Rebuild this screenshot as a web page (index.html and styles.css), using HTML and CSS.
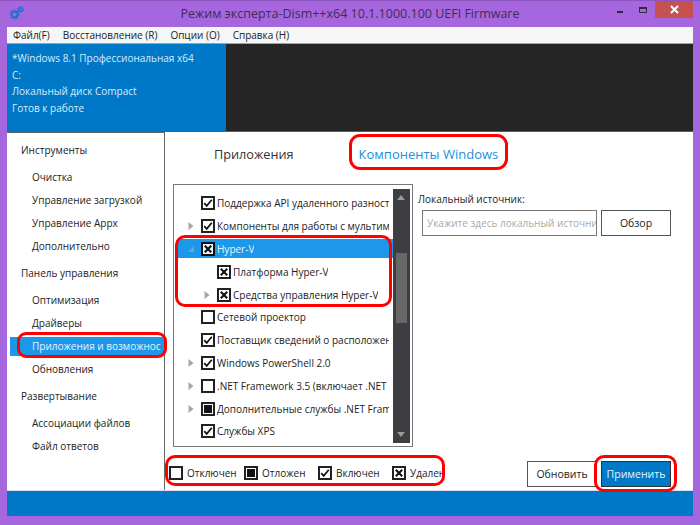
FILE: index.html
```html
<!DOCTYPE html>
<html lang="en">
<head>
    <meta charset="UTF-8">
    <title>Dism++</title>
    <link rel="stylesheet" href="styles.css">
</head>
<body>
    <svg class="defs" width="0" height="0">
        <symbol id="on" viewBox="0 0 10 10"><path d="M1.2 5.2l2.5 2.7L8.8 1.8" fill="none" stroke="#111" stroke-width="1.7"/></symbol>
        <symbol id="del" viewBox="0 0 10 10"><path d="M1.8 1.8l6.4 6.4M8.2 1.8L1.8 8.2" fill="none" stroke="#111" stroke-width="2.1"/></symbol>
        <symbol id="arrow" viewBox="0 0 8 10"><path d="M1.5 1l5 4-5 4z" fill="#a6a6a6"/></symbol>
    </svg>
    <div class="window">
        <div class="titlebar">
            <svg class="logo" width="14" height="14" viewBox="0 0 14 14">
                <circle cx="4.5" cy="8.5" r="3" fill="none" stroke="#0a7ad1" stroke-width="1.8"/>
                <circle cx="4.5" cy="8.5" r="4.4" fill="none" stroke="#0a7ad1" stroke-width="1.2" stroke-dasharray="1.6 1.6"/>
                <circle cx="10.5" cy="3.5" r="1.8" fill="none" stroke="#0a7ad1" stroke-width="1.5"/>
                <circle cx="10.5" cy="3.5" r="3" fill="none" stroke="#0a7ad1" stroke-width="1" stroke-dasharray="1.3 1.2"/>
            </svg>
            <div class="title">Режим эксперта-Dism++x64 10.1.1000.100 UEFI Firmware</div>
            <div class="controls">
                <svg class="ctl" width="27" height="18" viewBox="0 0 27 18"><rect x="13" y="10" width="6" height="2" fill="#2b2b3a"/></svg>
                <svg class="ctl" width="24" height="18" viewBox="0 0 24 18"><path d="M8.5 6.5h7v5h-7z" fill="none" stroke="#2b2b3a"/><rect x="8" y="6" width="8" height="2" fill="#2b2b3a"/></svg>
                <div class="close">
                    <svg width="9" height="9" viewBox="0 0 9 9"><path d="M1 1l7 7M8 1l-7 7" stroke="#fff" stroke-width="2"/></svg>
                </div>
            </div>
        </div>

        <div class="menu">
            <span>Файл(F)</span>
            <span>Восстановление (R)</span>
            <span>Опции (O)</span>
            <span>Справка (H)</span>
        </div>

        <div class="status">
            <div class="status-info">
                <p>*Windows 8.1 Профессиональная x64</p>
                <p>C:</p>
                <p>Локальный диск Compact</p>
                <p>Готов к работе</p>
            </div>
            <div class="status-dark"></div>
        </div>

        <div class="content">
            <div class="sidebar">
                <h3>Инструменты</h3>
                <a>Очистка</a>
                <a>Управление загрузкой</a>
                <a>Управление Appx</a>
                <a>Дополнительно</a>
                <h3>Панель управления</h3>
                <a>Оптимизация</a>
                <a>Драйверы</a>
                <a class="active">Приложения и возможнос</a>
                <a>Обновления</a>
                <h3>Развертывание</h3>
                <a>Ассоциации файлов</a>
                <a>Файл ответов</a>
                <div class="mark mark-side"></div>
            </div>

            <div class="main">
                <div class="tabs">
                    <div class="tab">Приложения</div>
                    <div class="tab tab-active">Компоненты Windows</div>
                </div>

                <div class="panel">
                    <div class="tree">
                        <div class="rows">
                            <div class="row lvl0"><span class="exp"></span><span class="box"><svg><use href="#on"/></svg></span><span class="txt">Поддержка API удаленного разност</span></div>
                            <div class="row lvl0"><span class="exp"><svg><use href="#arrow"/></svg></span><span class="box"><svg><use href="#on"/></svg></span><span class="txt">Компоненты для работы с мультим</span></div>
                            <div class="row lvl0 selected"><span class="exp exp-open"></span><span class="box"><svg><use href="#del"/></svg></span><span class="txt">Hyper-V</span></div>
                            <div class="row lvl1"><span class="exp"></span><span class="box"><svg><use href="#del"/></svg></span><span class="txt">Платформа Hyper-V</span></div>
                            <div class="row lvl1"><span class="exp"><svg><use href="#arrow"/></svg></span><span class="box"><svg><use href="#del"/></svg></span><span class="txt">Средства управления Hyper-V</span></div>
                            <div class="row lvl0"><span class="exp"></span><span class="box"></span><span class="txt">Сетевой проектор</span></div>
                            <div class="row lvl0"><span class="exp"></span><span class="box"><svg><use href="#on"/></svg></span><span class="txt">Поставщик сведений о расположен</span></div>
                            <div class="row lvl0"><span class="exp"><svg><use href="#arrow"/></svg></span><span class="box"><svg><use href="#on"/></svg></span><span class="txt">Windows PowerShell 2.0</span></div>
                            <div class="row lvl0"><span class="exp"><svg><use href="#arrow"/></svg></span><span class="box"></span><span class="txt">.NET Framework 3.5 (включает .NET 2</span></div>
                            <div class="row lvl0"><span class="exp"><svg><use href="#arrow"/></svg></span><span class="box box-partial"></span><span class="txt">Дополнительные службы .NET Fram</span></div>
                            <div class="row lvl0"><span class="exp"></span><span class="box"><svg><use href="#on"/></svg></span><span class="txt">Службы XPS</span></div>
                        </div>
                        <div class="scrollbar">
                            <span class="sb-up"></span>
                            <span class="sb-thumb"></span>
                            <span class="sb-down"></span>
                        </div>
                        <div class="mark mark-hyper"></div>
                    </div>

                    <div class="source">
                        <div class="source-label">Локальный источник:</div>
                        <div class="source-row">
                            <div class="source-input">Укажите здесь локальный источни</div>
                            <div class="btn btn-browse">Обзор</div>
                        </div>
                    </div>
                </div>

                <div class="bottom">
                    <div class="legend">
                        <div class="legend-item"><span class="box"></span>Отключен</div>
                        <div class="legend-item"><span class="box box-partial"></span>Отложен</div>
                        <div class="legend-item"><span class="box"><svg><use href="#on"/></svg></span>Включен</div>
                        <div class="legend-item"><span class="box"><svg><use href="#del"/></svg></span>Удален</div>
                    </div>
                    <div class="actions">
                        <div class="btn btn-refresh">Обновить</div>
                        <div class="btn btn-apply">Применить</div>
                    </div>
                </div>

                <div class="mark mark-tab"></div>
                <div class="mark mark-legend"></div>
                <div class="mark mark-apply"></div>
            </div>
        </div>

        <div class="footer"></div>
    </div>
</body>
</html>
```

FILE: styles.css
```css
* {
    margin: 0;
    padding: 0;
    box-sizing: border-box;
    font-family: 'Open Sans', 'Noto Sans', sans-serif;
}

body {
    background-color: #a666de;
    overflow: hidden;
}

.defs {
    position: absolute;
}

.window {
    width: 700px;
    height: 525px;
    background-color: #a666de;
    padding: 0 7px 9px;
    display: flex;
    flex-direction: column;
    border-top: 1px solid #8a55bd;
}

.titlebar {
    height: 26px;
    display: flex;
    align-items: flex-start;
    position: relative;
    flex-shrink: 0;
}

.logo {
    margin: 5px 0 0 3px;
}

.title {
    position: absolute;
    left: 0;
    right: 0;
    top: 4px;
    text-align: center;
    font-size: 12.5px;
    color: #3f2d55;
}

.controls {
    margin-left: auto;
    display: flex;
}

.close {
    width: 38px;
    height: 17px;
    background-color: #c75050;
    display: flex;
    align-items: center;
    justify-content: center;
}

.menu {
    height: 17px;
    background: #f5f6f7;
    border-bottom: 1px solid #a0a0a0;
    display: flex;
    align-items: center;
    gap: 13px;
    padding-left: 6px;
    font-size: 10px;
    color: #222;
    flex-shrink: 0;
}

.status {
    height: 87px;
    display: flex;
    background-color: #0078c8;
    flex-shrink: 0;
}

.status-info {
    width: 219px;
    padding: 6px 0 0 5px;
    color: #d8ecf9;
    font-size: 10px;
}

.status-info p {
    height: 16.5px;
    line-height: 16.5px;
    white-space: nowrap;
}

.status-dark {
    flex: 1;
    background-color: #252526;
}

.content {
    flex: 1;
    display: flex;
    background: white;
    min-height: 0;
    border-top: 1px solid #0078c8;
}

.sidebar {
    width: 158px;
    border: solid #666;
    border-width: 1px 1px 0 0;
    padding-top: 9px;
    position: relative;
    flex-shrink: 0;
    font-size: 10px;
    color: #222;
}

.sidebar h3 {
    font-size: 10px;
    font-weight: 400;
    height: 26px;
    line-height: 16px;
    padding-left: 14px;
    margin-top: 5px;
}

.sidebar h3:first-child {
    margin-top: 0;
}

.sidebar a {
    display: block;
    height: 23px;
    line-height: 19px;
    padding-left: 25px;
    white-space: nowrap;
    overflow: hidden;
}

.sidebar a.active {
    background-color: #1c97ea;
    color: #e6f3fc;
    margin-left: 3px;
    padding-left: 22px;
    height: 19px;
    margin-bottom: 4px;
}

.main {
    flex: 1;
    position: relative;
    display: flex;
    flex-direction: column;
    min-width: 0;
}

.tabs {
    height: 52px;
    display: flex;
    gap: 65px;
    padding: 13px 0 0 49px;
    font-size: 12.7px;
    color: #333;
    flex-shrink: 0;
}

.tab-active {
    color: #1c8fdc;
    font-size: 13px;
}

.panel {
    display: flex;
    height: 263px;
    padding-left: 8px;
}

.tree {
    width: 240px;
    height: 263px;
    border: 1px solid #777;
    display: flex;
    position: relative;
    padding: 4px 2px 3px 4px;
}

.rows {
    width: 215px;
    overflow: hidden;
    padding-top: 3px;
}

.row {
    height: 22.8px;
    display: flex;
    align-items: center;
    font-size: 10px;
    color: #222;
    white-space: nowrap;
}

.lvl0 {
    padding-left: 9px;
}

.lvl1 {
    padding-left: 25px;
}

.selected {
    background-color: #1c97ea;
    color: #e6f3fc;
    height: 19px;
    margin: 1.9px 0;
}

.exp {
    width: 14px;
    height: 10px;
    flex-shrink: 0;
}

.exp svg {
    width: 8px;
    height: 10px;
    display: block;
}

.exp-open {
    position: relative;
}

.exp-open::after {
    content: "";
    position: absolute;
    left: 1px;
    top: 2px;
    border-style: solid;
    border-width: 0 0 6px 6px;
    border-color: transparent transparent #5fa8dc transparent;
}

.box {
    width: 14px;
    height: 14px;
    border: 2px solid #222;
    background: white;
    flex-shrink: 0;
    margin-right: 2px;
    display: block;
}

.box svg {
    width: 10px;
    height: 10px;
    display: block;
}

.selected .box {
    border-color: #111;
    background: #e8f3fb;
}

.box-partial {
    background: #111;
    box-shadow: inset 0 0 0 1px white;
}

.txt {
    overflow: hidden;
    max-width: 172px;
}

.lvl1 .txt {
    max-width: 160px;
}

.scrollbar {
    width: 17px;
    background-color: #3e3e42;
    position: relative;
}

.sb-up,
.sb-down {
    position: absolute;
    left: 4px;
    border-style: solid;
    border-color: transparent;
}

.sb-up {
    top: 6px;
    border-width: 0 4px 5px;
    border-bottom-color: #9a9a9a;
}

.sb-down {
    bottom: 6px;
    border-width: 5px 4px 0;
    border-top-color: #9a9a9a;
}

.sb-thumb {
    position: absolute;
    left: 3px;
    top: 64px;
    width: 11px;
    height: 70px;
    background-color: #686868;
}

.source {
    padding-left: 5px;
    font-size: 10px;
    color: #222;
}

.source-label {
    margin-top: 7px;
    height: 16px;
    line-height: 16px;
}

.source-row {
    margin: 3px 0 0 4px;
    display: flex;
    gap: 4px;
}

.source-input {
    width: 175px;
    height: 26px;
    border: 1px solid #777;
    line-height: 24px;
    padding-left: 4px;
    color: #aaa;
    white-space: nowrap;
    overflow: hidden;
}

.btn {
    display: flex;
    align-items: center;
    justify-content: center;
    border: 1px solid #555;
    font-size: 10.5px;
    color: #222;
}

.btn-browse {
    width: 70px;
    height: 26px;
}

.bottom {
    flex: 1;
    display: flex;
    justify-content: space-between;
    align-items: flex-start;
}

.legend {
    display: grid;
    grid-template-columns: 75px 74px 74px auto;
    margin: 18px 0 0 4px;
    font-size: 10px;
    color: #222;
}

.legend-item {
    display: flex;
    align-items: center;
    height: 16px;
    gap: 2px;
    white-space: nowrap;
}

.actions {
    display: flex;
    gap: 4px;
    margin: 14px 22px 0 0;
}

.btn-refresh {
    width: 70px;
    height: 26px;
}

.btn-apply {
    width: 70px;
    height: 26px;
    background-color: #0078c8;
    color: #e6f3fc;
    border-color: #333;
}

.footer {
    height: 26px;
    background-color: #0078c8;
    flex-shrink: 0;
    border-top: 1px solid #dde;
}

/* red marks drawn over the screenshot */
.mark {
    position: absolute;
    border: 3px solid #f00;
    pointer-events: none;
}

.mark-side {
    left: 10px;
    top: 199px;
    width: 150px;
    height: 26px;
    border-radius: 9px;
}

.mark-hyper {
    left: 1px;
    top: 50px;
    width: 217px;
    height: 72px;
    border-radius: 10px;
}

.mark-tab {
    left: 184px;
    top: 2px;
    width: 159px;
    height: 36px;
    border-radius: 11px;
}

.mark-legend {
    left: 0;
    top: 323px;
    width: 280px;
    height: 31px;
    border-radius: 10px;
}

.mark-apply {
    left: 429px;
    top: 323px;
    width: 83px;
    height: 37px;
    border-radius: 10px;
}
```
